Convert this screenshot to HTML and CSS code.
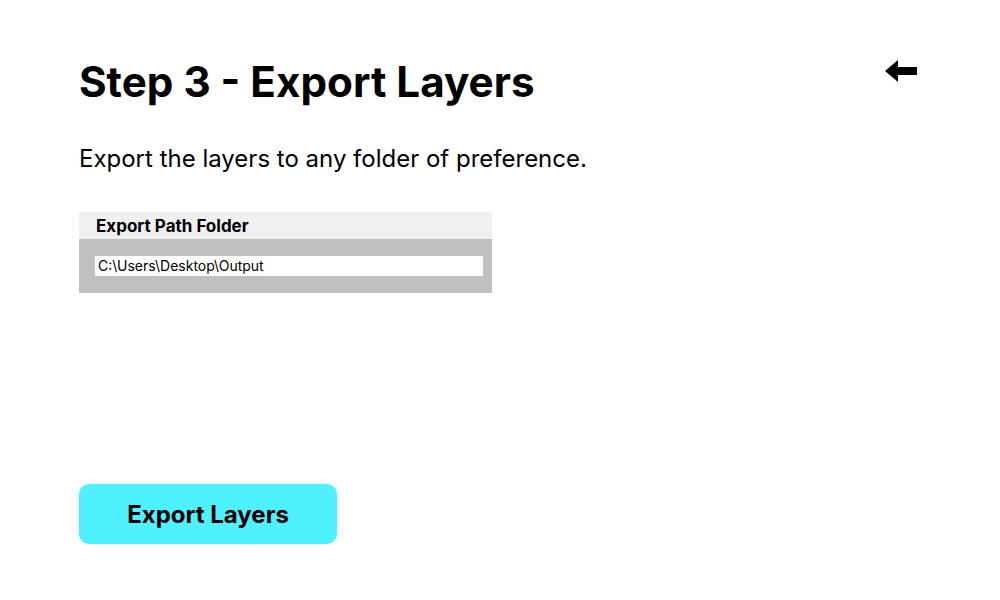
FILE: index.html
```html
<!DOCTYPE html>
<html>
<head>
<meta charset="utf-8">
<link rel="stylesheet" href="styles.css">
</head>
<body>
<div class="page">
  <div class="top">
    <h1 class="title">Step 3 - Export Layers</h1>
    <svg class="back" width="32" height="22" viewBox="0 0 32 22"><path d="M0 11 L13 0 L13 7 L32 7 L32 15 L13 15 L13 22 Z" fill="#000"/></svg>
  </div>
  <p class="desc">Export the layers to any folder of preference.</p>
  <div class="panel">
    <div class="panel-head">Export Path Folder</div>
    <div class="panel-body">
      <div class="input">C:\Users\Desktop\Output</div>
    </div>
  </div>
  <button class="btn">Export Layers</button>
</div>
</body>
</html>
```
FILE: styles.css
```css
html, body { margin: 0; padding: 0; background: #fff; }
body { font-family: Inter, "Noto Sans", sans-serif; color: #000; }
.page { width: 1000px; height: 600px; box-sizing: border-box; padding: 56px 83px 0 79px; }
.top { display: flex; justify-content: space-between; align-items: flex-start; }
.title { margin: 0; font-size: 42.2px; font-weight: 700; line-height: 52px; }
.back { margin-top: 4px; }
.desc { margin: 36px 0 0; font-size: 24px; line-height: 30px; }
.panel { margin-top: 38px; width: 413px; }
.panel-head { background: #f0f0f0; height: 27px; line-height: 28px; padding-left: 17px; font-size: 17px; font-weight: 700; }
.panel-body { background: #c0c0c0; height: 54px; padding: 17px 9px 0 16px; box-sizing: border-box; }
.input { background: #fff; height: 20px; line-height: 20px; font-size: 14px; padding-left: 3px; }
.btn { display: block; margin-top: 191px; width: 258px; height: 60px; border: 0; border-radius: 10px; background: #4ff0ff; font-family: Inter, "Noto Sans", sans-serif; font-size: 24px; font-weight: 700; color: #000; padding: 0; }
```
